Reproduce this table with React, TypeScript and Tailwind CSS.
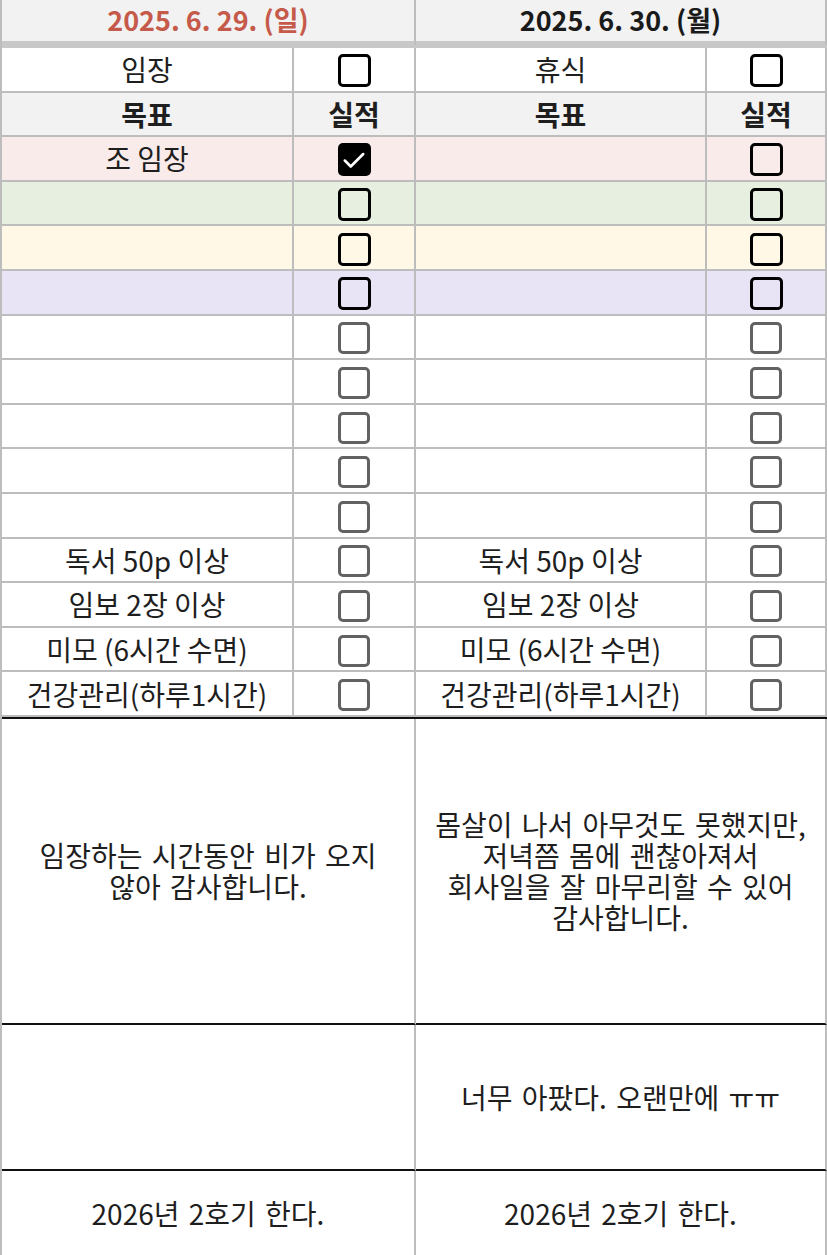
import React from 'react';

type Row = {
    left: string;
    right: string;
    bg: string;
    dark: boolean;
    leftChecked?: boolean;
};

const rows: Row[] = [
    { left: '조 임장', right: '', bg: 'bg-[#f9ebea]', dark: true, leftChecked: true },
    { left: '', right: '', bg: 'bg-[#e7efe1]', dark: true },
    { left: '', right: '', bg: 'bg-[#fff8e7]', dark: true },
    { left: '', right: '', bg: 'bg-[#e8e4f6]', dark: true },
    { left: '', right: '', bg: 'bg-white', dark: false },
    { left: '', right: '', bg: 'bg-white', dark: false },
    { left: '', right: '', bg: 'bg-white', dark: false },
    { left: '', right: '', bg: 'bg-white', dark: false },
    { left: '', right: '', bg: 'bg-white', dark: false },
    { left: '독서 50p 이상', right: '독서 50p 이상', bg: 'bg-white', dark: false },
    { left: '임보 2장 이상', right: '임보 2장 이상', bg: 'bg-white', dark: false },
    { left: '미모 (6시간 수면)', right: '미모 (6시간 수면)', bg: 'bg-white', dark: false },
    { left: '건강관리(하루1시간)', right: '건강관리(하루1시간)', bg: 'bg-white', dark: false },
];

const font = { fontFamily: '"Noto Sans CJK KR", "Noto Sans", sans-serif' };

const CheckBox = ({ dark, checked }: { dark: boolean; checked?: boolean }) => {
    if (checked) {
        return (
            <div className="w-[33px] h-[33px] rounded-[5px] bg-black flex items-center justify-center mt-[3px]">
                <svg width="26" height="26" viewBox="0 0 24 24" fill="none" stroke="white" strokeWidth="2.4" strokeLinecap="round" strokeLinejoin="round">
                    <path d="M3.5 12.5l5.5 5.5L20.5 6.5" />
                </svg>
            </div>
        );
    }
    return (
        <div
            className={
                dark
                    ? 'w-[33px] h-[33px] rounded-[5px] border-[3px] border-black mt-[3px]'
                    : 'w-[32px] h-[32px] rounded-[5px] border-[3px] border-[#626262] mt-[3px]'
            }
        />
    );
};

const Cell = ({ children, className = '' }: { children?: React.ReactNode; className?: string }) => (
    <div className={`flex items-center justify-center whitespace-nowrap border-r-2 border-[#bdbdbd] ${className}`}>{children}</div>
);

export default function App() {
    return (
        <div className="w-[827px] h-[1255px] overflow-hidden bg-white text-[#1e1e1e]" style={font}>
            <div className="border-l-2 border-[#bdbdbd]">
                {/* 날짜 헤더 */}
                <div className="grid grid-cols-[414px_411px] h-[48px] bg-[#f2f2f2] border-b-[7px] border-[#c8c8c8]">
                    <Cell className="text-[27px] font-bold text-[#c55a4a] pb-[4px]">2025. 6. 29. (일)</Cell>
                    <Cell className="text-[27px] font-bold text-[#1a1a1a] border-r-0 pb-[4px]">2025. 6. 30. (월)</Cell>
                </div>

                <div className="grid grid-cols-[292px_122px_291px_120px] text-[28px] leading-[40px]">
                    <Cell className="h-[44.6px] border-b-2">임장</Cell>
                    <Cell className="h-[44.6px] border-b-2"><CheckBox dark /></Cell>
                    <Cell className="h-[44.6px] border-b-2">휴식</Cell>
                    <Cell className="h-[44.6px] border-b-2 border-r-0"><CheckBox dark /></Cell>

                    <Cell className="h-[44.6px] border-b-2 font-bold bg-[#f2f2f2]">목표</Cell>
                    <Cell className="h-[44.6px] border-b-2 font-bold bg-[#f2f2f2]">실적</Cell>
                    <Cell className="h-[44.6px] border-b-2 font-bold bg-[#f2f2f2]">목표</Cell>
                    <Cell className="h-[44.6px] border-b-2 font-bold bg-[#f2f2f2] border-r-0">실적</Cell>

                    {rows.map((r, i) => (
                        <React.Fragment key={i}>
                            <Cell className={`h-[44.6px] border-b-2 ${r.bg} ${i === rows.length - 1 ? 'border-b-0' : ''}`}>{r.left}</Cell>
                            <Cell className={`h-[44.6px] border-b-2 ${r.bg} ${i === rows.length - 1 ? 'border-b-0' : ''}`}>
                                <CheckBox dark={r.dark} checked={r.leftChecked} />
                            </Cell>
                            <Cell className={`h-[44.6px] border-b-2 ${r.bg} ${i === rows.length - 1 ? 'border-b-0' : ''}`}>{r.right}</Cell>
                            <Cell className={`h-[44.6px] border-b-2 border-r-0 ${r.bg} ${i === rows.length - 1 ? 'border-b-0' : ''}`}>
                                <CheckBox dark={r.dark} />
                            </Cell>
                        </React.Fragment>
                    ))}
                </div>

                {/* 감사 / 메모 */}
                <div className="grid grid-cols-[414px_411px] border-t-2 border-[#111] h-[308px] text-[28px] leading-[31px] [word-spacing:3px]">
                    <Cell className="text-center border-b-2 border-b-[#111]">
                        임장하는 시간동안 비가 오지<br />않아 감사합니다.
                    </Cell>
                    <Cell className="text-center border-r-0 border-b-2 border-b-[#111]">
                        몸살이 나서 아무것도 못했지만,<br />저녁쯤 몸에 괜찮아져서<br />회사일을 잘 마무리할 수 있어<br />감사합니다.
                    </Cell>
                </div>
                <div className="grid grid-cols-[414px_411px] h-[146px] text-[28px] [word-spacing:3px]">
                    <Cell className="border-b-2 border-b-[#111]" />
                    <Cell className="border-r-0 border-b-2 border-b-[#111]">너무 아팠다. 오랜만에 ㅠㅠ</Cell>
                </div>
                <div className="grid grid-cols-[414px_411px] h-[84px] text-[28px] [word-spacing:3px]">
                    <Cell>2026년 2호기 한다.</Cell>
                    <Cell className="border-r-0">2026년 2호기 한다.</Cell>
                </div>
            </div>
        </div>
    );
}
